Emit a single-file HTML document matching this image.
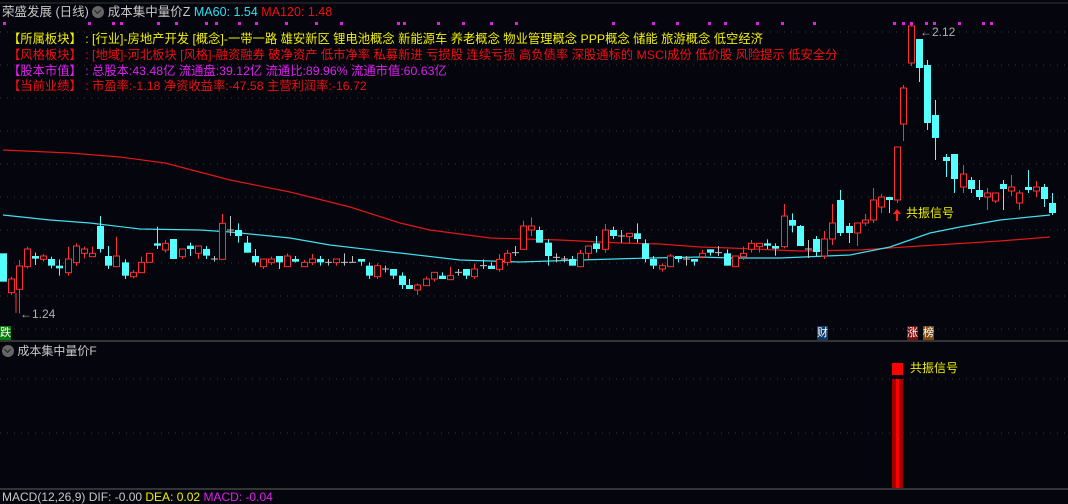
<!DOCTYPE html>
<html><head><meta charset="utf-8"><style>
html,body{margin:0;padding:0;background:#05050d;width:1068px;height:496px;overflow:hidden;font-family:"Liberation Sans","Noto Sans CJK SC",sans-serif}
.t{position:absolute;white-space:nowrap;font-size:12px;line-height:14px}
.row{font-size:12.3px}
.y{color:#f0f000}.r{color:#f01010}.m{color:#e020f0}.g{color:#c8c8c8}
.ic{display:inline-block;width:12px;height:12px;border-radius:50%;background:#666;vertical-align:-2px;position:relative}
.ic:after{content:"";position:absolute;left:3px;top:2px;width:4px;height:4px;border-right:1.5px solid #222;border-bottom:1.5px solid #222;transform:rotate(45deg)}
</style></head><body>
<svg id="s" width="1068" height="496" style="position:absolute;left:0;top:0"></svg>
<div class="t g" style="left:2px;top:5px;font-size:12.5px">荣盛发展 (日线) <span class="ic"></span> 成本集中量价Z <span style="color:#30e0f0">MA60: 1.54</span> <span class="r">MA120: 1.48</span></div>
<div class="t row" style="left:8px;top:32px"><span class="y">【所属板块】 : [行业]-房地产开发 [概念]-一带一路 雄安新区 锂电池概念 新能源车 养老概念 物业管理概念 PPP概念 储能 旅游概念 低空经济</span></div>
<div class="t r row" style="left:8px;top:48px">【风格板块】 : [地域]-河北板块 [风格]-融资融券 破净资产 低市净率 私募新进 亏损股 连续亏损 高负债率 深股通标的 MSCI成份 低价股 风险提示 低安全分</div>
<div class="t row" style="left:8px;top:64px"><span class="m">【股本市值】 : 总股本:43.48亿 流通盘:39.12亿 流通比:89.96% 流通市值:60.63亿</span></div>
<div class="t r row" style="left:8px;top:79px">【当前业绩】 : 市盈率:-1.18 净资收益率:-47.58 主营利润率:-16.72</div>
<div class="t" style="left:906px;top:206px;color:#f0f000">共振信号</div>
<div class="t" style="left:910px;top:361px;color:#f0f000">共振信号</div>
<div class="t g" style="left:2px;top:344px"><span class="ic"></span> 成本集中量价F</div>
<div class="t" style="left:2px;top:490px;color:#c8c8c8">MACD(12,26,9) DIF: -0.00 <span class="y">DEA: 0.02</span> <span class="m">MACD: -0.04</span></div>
<div class="t" style="left:20px;top:307px;color:#b0b0b0">←1.24</div>
<div class="t" style="left:920px;top:25px;color:#b0b0b0">←2.12</div>
<div class="t" style="left:0;top:326px;background:#0a7a0a;color:#fff;font-size:11px">跌</div>
<div class="t" style="left:817px;top:326px;background:#0d3a6a;color:#fff;font-size:11px">财</div>
<div class="t" style="left:907px;top:326px;background:#7a0a0a;color:#fff;font-size:11px">涨</div>
<div class="t" style="left:923px;top:326px;background:#7a4a10;color:#fff;font-size:11px">榜</div>
<script>
var s=document.getElementById('s'),h='';
h+='<line x1="0" y1="3" x2="1068" y2="3" stroke="#333" />';
[32,65,98,131,164,197,230,263,296,329,379,433].forEach(function(y){h+='<line x1="0" y1="'+y+'" x2="1068" y2="'+y+'" stroke="#3a3a3a" stroke-dasharray="1,6"/>';});
h+='<line x1="0" y1="341" x2="1068" y2="341" stroke="#444" stroke-width="1.5"/><line x1="0" y1="489" x2="1068" y2="489" stroke="#444" stroke-width="1.5"/>';
[3,88,112,120,157,175,205,215,238,255,285,315,340,397,403,437,462,490,515,612,652,676,708,724,756,781,813,893,902,910,925,933,958,982,990].forEach(function(x){h+='<rect x="'+x+'" y="22" width="3" height="3" fill="#e020e0"/>';});
var red=[[3,150],[70,153],[120,157],[165,163],[230,180],[290,192],[350,207],[400,223],[430,230],[490,238],[560,240],[620,243],[660,244],[700,247],[730,248],[800,251],[860,250],[920,246],[1000,241],[1050,237]];
var cy=[[3,215],[50,220],[90,223],[140,229],[200,230],[230,232],[290,238],[330,245],[390,252],[400,253],[460,260],[520,262],[580,260],[650,258],[700,257],[730,258],[780,258],[850,255],[890,247],[930,233],[960,227],[1000,220],[1050,215]];
function pl(a,c){return '<polyline fill="none" stroke="'+c+'" stroke-width="1.2" points="'+a.map(function(p){return p.join(',')}).join(' ')+'"/>';}
h+=pl(red,'#e01818')+pl(cy,'#40e0f0');
var A=[[8,'c',370,455,370,455],[33,'r',447,488,440,495],[57,'r',408,478,390,550],[82,'r',357,410,350,415],[105,'c',378,386,368,405],[130,'r',378,388,372,395],[154,'c',387,407,380,415],[178,'c',407,415,388,437],[204,'r',387,428,350,437],[229,'r',348,398,340,408],[253,'r',357,370,350,385],[277,'r',370,380,350,380],[301,'c',288,357,258,368],[325,'c',378,407,348,417],[349,'r',378,410,320,410],[376,'c',397,437,388,447],[400,'r',427,440,420,445],[424,'r',397,428,380,428],[448,'r',370,397,370,397],[472,'c',340,347,290,357],[496,'r',340,360,330,368],[520,'c',327,387,327,387],[546,'r',357,380,357,387],[570,'c',347,357,338,378],[595,'r',348,370,348,387],[619,'c',357,377,348,387],[643,'g',387,387,378,395],[667,'r',280,388,252,388],[690,'g',300,300,258,318],[715,'c',300,318,280,338],[742,'c',338,368,318,368],[766,'c',378,397,357,407],[790,'r',387,410,387,417],[814,'r',387,398,380,405],[838,'c',378,397,378,417],[862,'r',378,410,370,410],[886,'c',387,395,378,397],[912,'r',397,410,390,410],[936,'r',387,398,372,405],[960,'c',387,397,378,407],[984,'g',397,397,387,407],[1008,'r',387,398,387,407],[1032,'g',397,397,370,407],[1056,'g',397,397,378,397],[1084,'c',387,395,387,407],[1108,'c',407,437,397,447],[1132,'r',407,440,400,447],[1156,'g',417,417,407,427],[1180,'c',417,437,417,447]];
var B=[[5,'c',437,465,427,477],[28,'c',465,477,447,477],[52,'r',465,480,460,495],[78,'r',447,467,440,467],[102,'r',427,447,427,455],[127,'c',437,447,427,447],[151,'r',437,449,410,449],[175,'g',427,427,417,437],[199,'c',417,437,417,447],[223,'r',417,440,400,447],[248,'g',407,407,388,417],[273,'c',407,417,397,417],[297,'r',388,418,372,425],[321,'r',370,397,360,407],[345,'g',368,368,348,378],[370,'r',288,358,272,358],[394,'r',288,300,262,318],[418,'c',300,338,290,338],[445,'c',338,378,328,407],[469,'g',382,382,370,397],[493,'g',387,387,378,397],[516,'c',387,407,378,407],[541,'r',370,410,360,410],[565,'r',348,370,348,387],[589,'c',340,357,318,368],[616,'r',300,358,282,368],[640,'c',300,318,290,327],[664,'g',318,318,300,338],[688,'r',310,320,310,340],[712,'c',310,327,280,338],[736,'c',340,387,328,397],[760,'c',387,407,378,417],[786,'r',407,417,400,425],[810,'r',378,410,372,410],[834,'c',378,387,378,397],[858,'g',387,387,378,407],[883,'c',387,395,387,407],[907,'r',370,380,360,385],[931,'c',358,368,358,377],[955,'g',368,368,348,378],[982,'c',370,407,358,407],[1006,'r',378,410,378,410],[1030,'r',370,380,350,390],[1054,'r',340,358,330,368],[1078,'r',340,350,340,368],[1102,'c',340,347,328,357],[1126,'c',348,356,340,377],[1152,'r',258,350,222,355],[1176,'c',270,287,250,307]];
var C=[[800,'c',226,246,225,246],[808,'g',249,249,240,258],[816,'c',239,252,236,256],[824,'r',239,256,231,259],[832,'r',223,239,204,245],[840,'c',200,233,190,236],[849,'c',226,233,223,243],[857,'r',223,233,223,246],[865,'r',220,223,214,226],[873,'r',200,220,188,223],[881,'r',197,207,194,213],[889,'c',197,200,197,213],[897,'r',147,200,147,203],[903,'r',88,124,85,141],[911,'r',26,63,22,66],[919,'c',39,68,39,82],[927,'c',65,123,60,130],[935,'c',115,138,100,160],[946,'c',157,161,154,177],[954,'c',154,179,154,193],[963,'r',174,187,165,193],[971,'c',180,189,177,193],[979,'c',190,197,180,200],[987,'r',193,197,188,210],[995,'r',193,201,193,203],[1003,'c',184,189,180,210],[1011,'r',187,191,175,196],[1019,'r',193,203,190,210],[1028,'c',187,190,170,193],[1036,'r',187,191,181,197],[1044,'c',187,199,184,207],[1052,'c',203,213,193,215]];
var all=[];
A.forEach(function(d){all.push([d[0]/3,d[1],130+d[2]/3,130+d[3]/3,130+d[4]/3,130+d[5]/3]);});
B.forEach(function(d){all.push([400+d[0]/3,d[1],130+d[2]/3,130+d[3]/3,130+d[4]/3,130+d[5]/3]);});
C.forEach(function(d){all.push(d);});
all.forEach(function(d){var x=Math.round(d[0])+0.5,t=d[2],b=d[3],wt=d[4],wb=d[5];
 var col=d[1]=='r'?'#ff3030':d[1]=='c'?'#54ffff':'#c0c0c0';
 h+='<line x1="'+x+'" y1="'+wt+'" x2="'+x+'" y2="'+wb+'" stroke="'+col+'"/>';
 if(d[1]=='g'){h+='<line x1="'+(x-3.5)+'" y1="'+t+'" x2="'+(x+3.5)+'" y2="'+t+'" stroke="'+col+'"/>';}
 else if(d[1]=='r'){h+='<rect x="'+(x-3)+'" y="'+t+'" width="6" height="'+Math.max(b-t,1)+'" fill="#05050d" stroke="'+col+'"/>';}
 else{h+='<rect x="'+(x-3.5)+'" y="'+t+'" width="7" height="'+Math.max(b-t,2)+'" fill="'+col+'"/>';}
});
h+='<line x1="16" y1="293" x2="16" y2="313" stroke="#ff3030"/>';
h+='<path d="M897 209 L893 214 L896 214 L896 221 L898 221 L898 214 L901 214 Z" fill="#ff2020"/>';
h+='<rect x="892" y="363" width="11" height="12" fill="#ff0000"/>';
h+='<rect x="892" y="379" width="11" height="109" fill="#a00000"/><rect x="896" y="379" width="3" height="109" fill="#ff0000"/>';
s.innerHTML=h;
</script>
</body></html>
